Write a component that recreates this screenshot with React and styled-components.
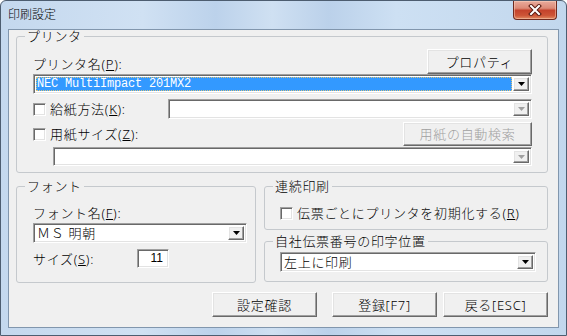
import React from 'react';
import styled, { createGlobalStyle, css } from 'styled-components';

const GlobalStyle = createGlobalStyle`
  html, body {
    margin: 0;
    padding: 0;
  }
  body {
    font-family: "Noto Sans", "Noto Sans CJK JP", sans-serif;
    font-size: 13px;
    font-weight: 300;
    letter-spacing: 0.7px;
    color: #000000;
  }
  * {
    box-sizing: border-box;
  }
`;

const sunken = css`
  border: 1px solid;
  border-color: #a0a0a0 #ffffff #ffffff #a0a0a0;
  box-shadow: inset 1px 1px 0 #696969, inset -1px -1px 0 #e3e3e3;
`;

const raised = css`
  border: 1px solid;
  border-color: #ffffff #696969 #696969 #ffffff;
  box-shadow: inset -1px -1px 0 #a0a0a0, inset 1px 1px 0 #e3e3e3;
  background: #f0f0f0;
`;

const Window = styled.div`
  width: 567px;
  height: 336px;
  display: flex;
  flex-direction: column;
  border: 1px solid #4d5d70;
  border-radius: 6px 6px 0 0;
  background: linear-gradient(90deg, #c4d8ee 0%, #d0e1f3 25%, #bcd2eb 38%, #cfe0f2 48%, #bbd1ea 58%, #cde0f3 70%, #c2d7ed 100%);
  padding: 0 7px 7px 7px;
  overflow: hidden;
`;

const TitleBar = styled.div`
  height: 28px;
  display: flex;
  justify-content: space-between;
  align-items: flex-start;
  margin: 0 -7px;
  padding-left: 7px;
`;

const Title = styled.div`
  font-size: 12px;
  line-height: 14px;
  margin-top: 7px;
  letter-spacing: 0;
  color: #000000;
`;

const CloseButton = styled.div`
  width: 44px;
  height: 19px;
  margin-right: 9px;
  border: 1px solid #6f2a1f;
  border-top: none;
  border-radius: 0 0 4px 4px;
  background: linear-gradient(180deg, #e9ab9c 0%, #dc8a77 40%, #c4432c 52%, #cd5537 80%, #e08a62 100%);
  box-shadow: inset 0 0 0 1px rgba(255, 220, 200, 0.45);
  display: flex;
  align-items: center;
  justify-content: center;
`;

const Client = styled.div`
  flex: 1;
  background: #f0f0f0;
  border: 1px solid #8196ad;
  padding: 0 10px 0 7px;
  display: flex;
  flex-direction: column;
`;

const Group = styled.fieldset`
  margin: ${p => p.$mt || 0}px 0 0 0;
  padding: 0;
  min-width: 0;
  border: 1px solid #c5c9cd;
  border-radius: 3px;
`;

const Legend = styled.legend`
  margin-left: 8px;
  padding: 0 2px;
  line-height: 12px;
  font-size: 13px;
`;

const GroupBody = styled.div`
  padding: ${p => p.$pad};
  display: flex;
  flex-direction: column;
`;

const LabelRow = styled.div`
  display: flex;
  justify-content: space-between;
  align-items: flex-end;
  height: 25px;
`;

const Label = styled.span`
  line-height: 14px;
  white-space: nowrap;
  margin-bottom: ${p => p.$mb || 0}px;
  width: ${p => (p.$w ? `${p.$w}px` : 'auto')};
  flex: none;
`;

const Row = styled.div`
  display: flex;
  align-items: center;
  justify-content: ${p => (p.$start ? 'flex-start' : 'space-between')};
  margin-top: ${p => p.$mt || 0}px;
  height: ${p => p.$h}px;
`;

const CheckLabel = styled.label`
  display: flex;
  align-items: center;
  gap: 4px;
  white-space: nowrap;
  line-height: 14px;
  width: ${p => (p.$w ? `${p.$w}px` : 'auto')};
  flex: none;
`;

const CheckBox = styled.span`
  ${sunken}
  width: 13px;
  height: 13px;
  background: #ffffff;
  flex: none;
`;

const Combo = styled.div`
  ${sunken}
  display: flex;
  height: ${p => p.$h || 20}px;
  padding: 2px;
  background: #ffffff;
  margin-top: ${p => p.$mt || 0}px;
  margin-left: ${p => p.$ml || 0}px;
  flex: ${p => (p.$grow ? 1 : 'none')};
`;

const ComboText = styled.div`
  flex: 1;
  display: flex;
  align-items: center;
  padding-left: 1px;
  line-height: 14px;
  white-space: nowrap;
  margin-right: 1px;
  ${p =>
    p.$selected &&
    css`
      background: #3399ff;
      color: #ffffff;
      outline: 1px dotted #d9c27a;
      outline-offset: -1px;
      font-family: "Liberation Mono", "DejaVu Sans Mono", monospace;
      font-size: 12px;
      font-weight: 400;
      letter-spacing: -0.2px;
    `}
`;

const DropButton = styled.div`
  ${raised}
  width: 16px;
  flex: none;
  display: flex;
  align-items: center;
  justify-content: center;
`;

const PushButton = styled.button`
  ${raised}
  width: ${p => p.$w}px;
  height: ${p => p.$h || 25}px;
  margin-left: ${p => p.$ml || 0}px;
  padding: 0;
  font: inherit;
  font-size: 13px;
  line-height: 14px;
  letter-spacing: 0.7px;
  color: ${p => (p.disabled ? '#a0a0a0' : '#000000')};
  flex: none;
`;

const NumBox = styled.div`
  ${sunken}
  width: 32px;
  height: 19px;
  background: #ffffff;
  text-align: right;
  padding-right: 5px;
  line-height: 16px;
  font-family: "Liberation Sans", sans-serif;
  font-size: 12px;
  font-weight: 400;
  letter-spacing: 0;
`;

const Columns = styled.div`
  display: grid;
  grid-template-columns: 240px 1fr;
  column-gap: 8px;
  margin-top: 7px;
  align-items: start;
`;

const Stack = styled.div`
  display: flex;
  flex-direction: column;
`;

const ButtonBar = styled.div`
  display: flex;
  justify-content: flex-end;
  margin-top: 9px;
`;

const Arrow = ({ disabled }) => (
  <svg width="7" height="4" viewBox="0 0 7 4">
    <polygon points="0,0 7,0 3.5,4" fill={disabled ? '#a0a0a0' : '#000000'} />
  </svg>
);

const Select = ({ children, selected, disabled, h, mt, ml, grow }) => (
  <Combo $h={h} $mt={mt} $ml={ml} $grow={grow}>
    <ComboText $selected={selected}>{children}</ComboText>
    <DropButton>
      <Arrow disabled={disabled} />
    </DropButton>
  </Combo>
);

export default function App() {
  return (
    <>
      <GlobalStyle />
      <Window>
        <TitleBar>
          <Title>印刷設定</Title>
          <CloseButton>
            <svg width="14" height="12" viewBox="0 0 14 12">
              <path d="M3 2 L11 10 M11 2 L3 10" stroke="#5a1a10" strokeWidth="4" strokeLinecap="square" />
              <path d="M3 2 L11 10 M11 2 L3 10" stroke="#ffffff" strokeWidth="2" strokeLinecap="square" />
            </svg>
          </CloseButton>
        </TitleBar>
        <Client>
          <Group>
            <Legend>プリンタ</Legend>
            <GroupBody $pad="7px 15px 6px 16px">
              <LabelRow>
                <Label $mb={3}>
                  プリンタ名(<u>P</u>):
                </Label>
                <PushButton $w={105}>プロパティ</PushButton>
              </LabelRow>
              <Select selected>NEC MultiImpact 201MX2</Select>
              <Row $mt={5} $h={20}>
                <CheckLabel $w={135}>
                  <CheckBox />
                  <span>
                    給紙方法(<u>K</u>):
                  </span>
                </CheckLabel>
                <Select disabled grow />
              </Row>
              <Row $mt={3} $h={24}>
                <CheckLabel>
                  <CheckBox />
                  <span>
                    用紙サイズ(<u>Z</u>):
                  </span>
                </CheckLabel>
                <PushButton $w={129} $h={24} disabled>
                  用紙の自動検索
                </PushButton>
              </Row>
              <Select disabled h={19} mt={1} ml={20} />
            </GroupBody>
          </Group>
          <Columns>
            <Group>
              <Legend>フォント</Legend>
              <GroupBody $pad="14px 8px 14px 16px">
                <Label>
                  フォント名(<u>F</u>):
                </Label>
                <Select mt={3}>ＭＳ 明朝</Select>
                <Row $mt={6} $h={19} $start>
                  <Label $w={104}>
                    サイズ(<u>S</u>):
                  </Label>
                  <NumBox>11</NumBox>
                </Row>
              </GroupBody>
            </Group>
            <Stack>
              <Group>
                <Legend>連続印刷</Legend>
                <GroupBody $pad="13px 11px 8px 15px">
                  <Row $h={16} $start>
                    <CheckLabel>
                      <CheckBox />
                      <span>
                        伝票ごとにプリンタを初期化する(<u>R</u>)
                      </span>
                    </CheckLabel>
                  </Row>
                </GroupBody>
              </Group>
              <Group $mt={5}>
                <Legend>自社伝票番号の印字位置</Legend>
                <GroupBody $pad="5px 11px 9px 15px">
                  <Select>左上に印刷</Select>
                </GroupBody>
              </Group>
            </Stack>
          </Columns>
          <ButtonBar>
            <PushButton $w={105}>設定確認</PushButton>
            <PushButton $w={105} $ml={15}>
              登録[F7]
            </PushButton>
            <PushButton $w={105} $ml={6}>
              戻る[ESC]
            </PushButton>
          </ButtonBar>
        </Client>
      </Window>
    </>
  );
}
